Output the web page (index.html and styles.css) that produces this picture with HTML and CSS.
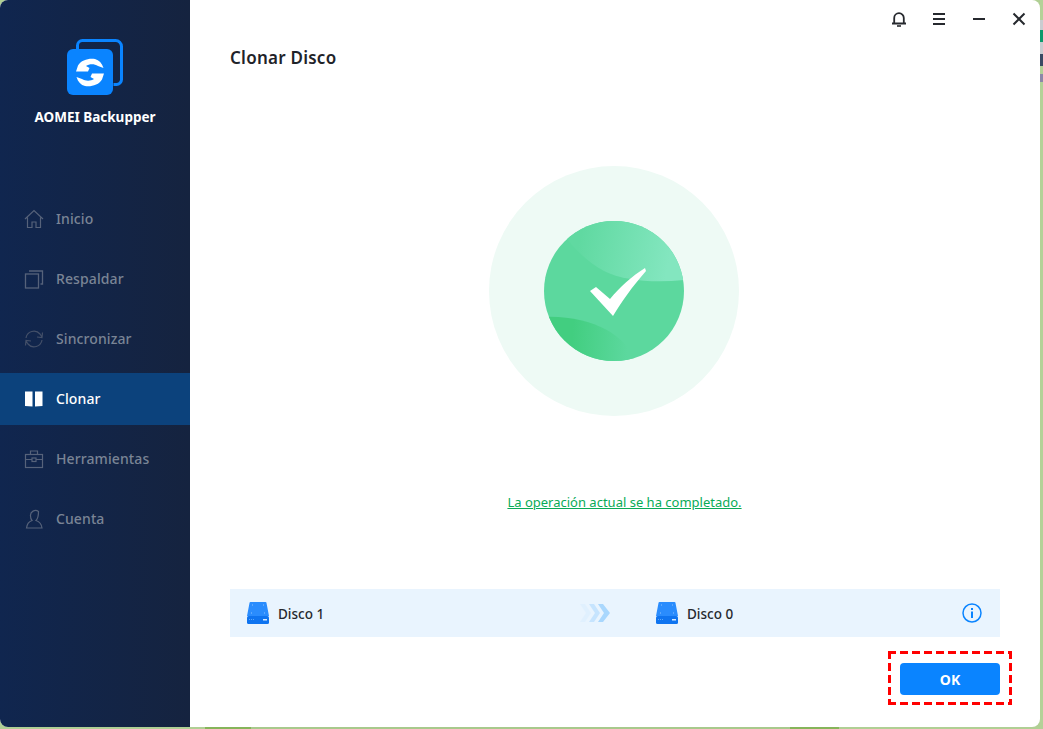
FILE: index.html
```html
<!DOCTYPE html>
<html lang="es">
<head>
  <meta charset="UTF-8">
  <meta name="viewport" content="width=device-width, initial-scale=1.0">
  <title>AOMEI Backupper - Clonar Disco</title>
  <link rel="stylesheet" href="styles.css">
</head>
<body>
  <div class="desktop">
    <div class="window">
      <aside class="sidebar">
        <div class="brand">
          <svg class="brand-icon" width="56" height="56" viewBox="0 0 56 56">
            <path d="M10.500 10V6.500a5 5 0 0 1 5-5h33a6 6 0 0 1 6 6v33a5 5 0 0 1-5 5h-3" fill="none" stroke="#0a84ff" stroke-width="3"/>
            <rect x="0" y="10" width="46" height="46" rx="6" fill="#0a84ff"/>
            <path id="sync-arc" d="M9 32.500 11 26.500C14 21 22 19 28 20 32 21 35 24 36.500 29L31 27C27 24.500 22 25 19 27L22.500 29 21 32.500z" fill="#fff"/>
            <use href="#sync-arc" transform="rotate(180 23 33.500)"/>
          </svg>
          <div class="brand-name">AOMEI Backupper</div>
        </div>
        <nav class="nav">
          <a class="nav-item">
            <svg width="20" height="20" viewBox="0 0 20 20" fill="none" stroke="currentColor" stroke-width="1.2">
              <path d="M1 10 10 1.500 19 10M3.500 8.500V18.500H8V13h4v5.500h4.500V8.500"/>
            </svg>
            <span>Inicio</span>
          </a>
          <a class="nav-item">
            <svg width="20" height="20" viewBox="0 0 20 20" fill="none" stroke="currentColor" stroke-width="1.3">
              <rect x="1.500" y="5" width="13" height="14"/>
              <path d="M5 2h13.500v13H16.500"/>
            </svg>
            <span>Respaldar</span>
          </a>
          <a class="nav-item sync">
            <svg width="20" height="20" viewBox="0 0 20 20" fill="none" stroke="currentColor" stroke-width="1.2">
              <path d="M2 9a8 8 0 0 1 14-4l2 3M18.500 3.500 18 8.500l-5-.5"/>
              <path d="M18 11a8 8 0 0 1-14 4l-2-3M1.500 16.500 2 11.500l5 .5"/>
            </svg>
            <span>Sincronizar</span>
          </a>
          <a class="nav-item active">
            <svg width="20" height="20" viewBox="0 0 20 20" fill="currentColor">
              <path d="M1 2.500h7.500v15L1 17zM11 2.500h7.500V17l-7.500.5z"/>
            </svg>
            <span>Clonar</span>
          </a>
          <a class="nav-item">
            <svg width="20" height="20" viewBox="0 0 20 20" fill="none" stroke="currentColor" stroke-width="1.2">
              <rect x="1.500" y="5.500" width="17" height="13"/>
              <path d="M6.500 5.500V2h7v3.500M1.500 10.500h6.500M12 10.500h6.500"/>
              <rect x="8" y="9" width="4" height="3.500"/>
            </svg>
            <span>Herramientas</span>
          </a>
          <a class="nav-item">
            <svg width="20" height="20" viewBox="0 0 20 20" fill="none" stroke="currentColor" stroke-width="1.2">
              <path d="M6.500 7a5 5 0 0 1 8-4.500c0 5-1 7.500-2.500 9 3 1 5.500 3.500 6 7.500H2.500c.5-4 2.500-6.500 5.500-7.500-1-1-1.500-2.500-1.500-4.500z"/>
            </svg>
            <span>Cuenta</span>
          </a>
        </nav>
      </aside>

      <main class="main">
        <div class="titlebar">
          <svg width="16" height="16" viewBox="0 0 16 16" fill="none" stroke="#26292e" stroke-width="1.8">
            <path d="M3.200 12V7a4.800 4.800 0 0 1 9.600 0v5M1 12.500h14"/>
            <path d="M6 15h4" stroke-width="1.600"/>
          </svg>
          <svg width="16" height="16" viewBox="0 0 16 16" stroke="#26292e" stroke-width="2">
            <path d="M2 3h12M2 8h12M2 13h12"/>
          </svg>
          <svg width="16" height="16" viewBox="0 0 16 16" stroke="#26292e" stroke-width="2">
            <path d="M2 8h12"/>
          </svg>
          <svg width="16" height="16" viewBox="0 0 16 16" stroke="#26292e" stroke-width="2">
            <path d="M2.500 2.500l11 11M13.500 2.500l-11 11"/>
          </svg>
        </div>

        <h1 class="page-title">Clonar Disco</h1>

        <div class="result">
          <div class="halo">
            <svg class="badge" width="140" height="140" viewBox="0 0 140 140">
              <defs>
                <clipPath id="disc"><circle cx="70" cy="70" r="70"/></clipPath>
                <linearGradient id="top-wave" gradientUnits="userSpaceOnUse" x1="125" y1="40" x2="35" y2="22">
                  <stop offset="0" stop-color="#83e6bf"/>
                  <stop offset="1" stop-color="#60d9a1"/>
                </linearGradient>
                <linearGradient id="low-wave" gradientUnits="userSpaceOnUse" x1="28" y1="118" x2="84" y2="122">
                  <stop offset="0" stop-color="#42ce80"/>
                  <stop offset="1" stop-color="#5cd89e"/>
                </linearGradient>
              </defs>
              <g clip-path="url(#disc)">
                <rect width="140" height="140" fill="#5cd89e"/>
                <path d="M10 0H140V59C110 62 80 60 60 50 45 42 30 28 20 14z" fill="url(#top-wave)"/>
                <path d="M0 96C25 95 45 100 63 109 75 116 85 125 92 140H0z" fill="url(#low-wave)"/>
              </g>
              <path d="M46 70 52 66 66 78C76 66 88 55 101 47L102 50C88 66 78 80 69 95z" fill="#fff"/>
            </svg>
          </div>
          <a class="result-link">La operación actual se ha completado.</a>
        </div>

        <div class="disk-bar">
          <div class="disk disk-source">
            <svg width="22" height="22" viewBox="0 0 22 22">
              <g id="disk-glyph">
                <path d="M3.500 0h15a1 1 0 0 1 1 1L22 14H0L2.500 1a1 1 0 0 1 1-1z" fill="#2a8cfd"/>
                <rect y="14" width="22" height="8" rx="1.500" fill="#0f74f0"/>
                <rect x="16" y="17" width="4" height="1.500" fill="#d5e9ff"/>
                <path d="M2 17.500h5" stroke="#5da7f8" stroke-dasharray="1 1"/>
                <path d="M5 3h1M16 3h1M4 11h1M17 11h1" stroke="#8cc3ff"/>
              </g>
            </svg>
            <span>Disco 1</span>
          </div>
          <svg class="arrows" width="30" height="18" viewBox="0 0 30 18">
            <path d="M0 0h5l6 9-6 9H0l6-9z" fill="#e0f0fe"/>
            <path d="M9 0h5l6 9-6 9H9l6-9z" fill="#c6e4fe"/>
            <path d="M18 0h5l7 9-7 9h-5l6-9z" fill="#a9d7fd"/>
          </svg>
          <div class="disk">
            <svg width="22" height="22" viewBox="0 0 22 22"><use href="#disk-glyph"/></svg>
            <span>Disco 0</span>
          </div>
          <svg class="info" width="20" height="20" viewBox="0 0 20 20">
            <circle cx="10" cy="10" r="9" fill="none" stroke="#0a84ff" stroke-width="1.500"/>
            <rect x="9" y="8.500" width="2" height="6.500" fill="#0a84ff"/>
            <rect x="9" y="5" width="2" height="2" fill="#0a84ff"/>
          </svg>
        </div>

        <div class="actions">
          <div class="highlight">
            <button class="ok-btn">OK</button>
          </div>
        </div>
      </main>
    </div>
    <div class="desktop-edge"></div>
  </div>
</body>
</html>
```

FILE: styles.css
```css
html, body {
  margin: 0;
  height: 100%;
  overflow: hidden;
}
body {
  font-family: "Noto Sans", "Open Sans", sans-serif;
  background: linear-gradient(90deg, #b0cf94 0 205px, #86b45a 205px 251px, #a8c98c 251px 790px, #86b45a 790px 839px, #b0cf94 839px);
}
.desktop {
  display: flex;
  height: 729px;
  align-items: flex-start;
}
.window {
  display: flex;
  width: 1040px;
  height: 727px;
  background-color: #fff;
  border-radius: 8px;
  overflow: hidden;
}
.desktop-edge {
  width: 3px;
  height: 729px;
  background: linear-gradient(#b4d198 0 20px, #c9ccd0 20px 30px, #0c9a6c 30px 42px, #c9ccd0 42px 54px, #3a4a63 54px 66px, #b4d198 66px 74px, #8c88a8 74px 82px, #b4d198 82px);
}

.sidebar {
  width: 190px;
  flex-shrink: 0;
  background: linear-gradient(90deg, #10264f, #15233f);
}
.brand {
  display: flex;
  flex-direction: column;
  align-items: center;
  height: 193px;
  padding-top: 39px;
  box-sizing: border-box;
}
.brand-icon {
  display: block;
}
.brand-name {
  margin-top: 11px;
  color: #fff;
  font-size: 13.5px;
  font-weight: 700;
  line-height: 22px;
}
.nav {
  display: flex;
  flex-direction: column;
  gap: 8px;
}
.nav-item {
  display: flex;
  align-items: center;
  gap: 12px;
  height: 52px;
  padding-left: 24px;
  color: #7a8495;
  font-size: 14px;
  font-weight: 500;
  letter-spacing: 0.1px;
  line-height: 50px;
}
.nav-item svg {
  flex-shrink: 0;
  color: #56627a;
}
.nav-item.sync svg {
  color: #445069;
}
.nav-item.active {
  background-color: #0c427c;
  color: #fff;
}
.nav-item.active svg {
  color: #fff;
}

.main {
  flex: 1;
  display: flex;
  flex-direction: column;
  padding: 0 40px;
  min-width: 0;
}
.titlebar {
  display: flex;
  justify-content: flex-end;
  gap: 24px;
  height: 38px;
  padding-top: 11px;
  margin-right: -27px;
  box-sizing: border-box;
}
.page-title {
  margin: 8px 0 0;
  color: #1f2329;
  font-size: 17px;
  font-weight: 600;
  letter-spacing: 0.25px;
  line-height: 24px;
}
.result {
  display: flex;
  flex-direction: column;
  align-items: center;
  padding: 96px 2px 0 0;
  height: 519px;
  box-sizing: border-box;
}
.halo {
  display: flex;
  align-items: center;
  justify-content: center;
  width: 250px;
  height: 250px;
  border-radius: 50%;
  background-color: #eefaf5;
}
.badge {
  display: block;
}
.result-link {
  margin: 76px 0 0 21px;
  color: #09ab57;
  font-size: 13px;
  line-height: 20px;
  text-decoration: underline;
}

.disk-bar {
  display: flex;
  align-items: center;
  height: 48px;
  padding: 0 18px 0 17px;
  background-color: #e9f4fe;
  color: #26292e;
  font-size: 13.5px;
  font-weight: 500;
}
.disk {
  display: flex;
  align-items: center;
  gap: 9px;
}
.disk span {
  padding-top: 2px;
}
.disk-source {
  width: 333px;
}
.arrows {
  margin-right: 46px;
}
.info {
  margin-left: auto;
}
.actions {
  display: flex;
  justify-content: flex-end;
  margin-top: 14px;
  margin-right: -12px;
}
.highlight {
  padding: 12px 12px 10px;
  background:
    repeating-linear-gradient(90deg, #f00 0 8px, transparent 8px 12px) top / 100% 3px no-repeat,
    repeating-linear-gradient(90deg, #f00 0 8px, transparent 8px 12px) bottom / 100% 3px no-repeat,
    repeating-linear-gradient(#f00 0 8px, transparent 8px 12px) left / 3px 100% no-repeat,
    repeating-linear-gradient(#f00 0 8px, transparent 8px 12px) right / 3px 100% no-repeat;
}
.ok-btn {
  display: block;
  width: 100px;
  height: 32px;
  padding: 0;
  border: none;
  border-radius: 4px;
  background-color: #0a84ff;
  color: #fff;
  font-family: inherit;
  font-size: 14px;
  font-weight: 700;
}
```
